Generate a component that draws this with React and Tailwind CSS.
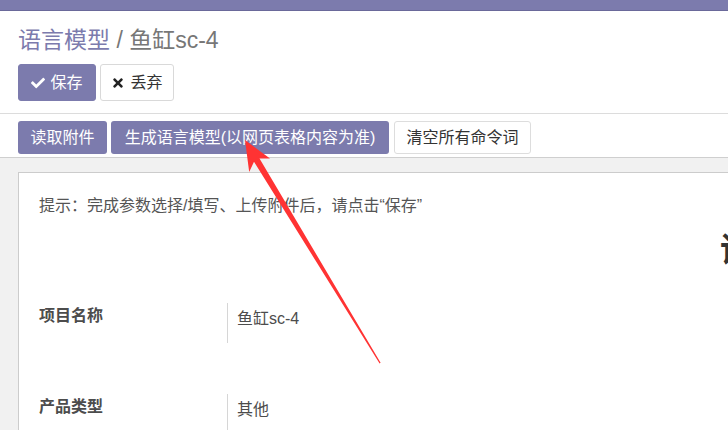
import { FaCheck, FaTimes } from "react-icons/fa";

const font = "font-['Liberation_Sans','Noto_Sans_CJK_SC',sans-serif]";

function Arrow() {
  // red annotation arrow drawn over the page
  return (
    <svg
      className="pointer-events-none absolute left-0 top-0"
      width="728"
      height="430"
      viewBox="0 0 728 430"
    >
      <polygon
        points="245,140 270,158.5 259.5,158.6 380.6,362.8 379.6,363.4 254,161.8 249.2,172"
        fill="#ff3333"
      />
    </svg>
  );
}

export default function App() {
  return (
    <div className={`relative h-[430px] w-[728px] overflow-hidden bg-white text-[#4c4c4c] ${font}`}>
      {/* TOP BAR */}
      <div className="h-[11px] bg-[#7c7bad] border-b border-[#6a699a]" />

      {/* CONTROL PANEL */}
      <div className="border-b border-[#dcdcdc] px-[18px] pb-[12px] pt-[15px]">
        <div className="text-[23px] leading-[28px] whitespace-nowrap">
          <span className="text-[#7c7bad]">语言模型</span>
          <span className="text-[#777777]"> / 鱼缸sc-4</span>
        </div>
        <div className="mt-[10px] flex gap-[4px]">
          <button className="flex h-[37px] w-[78px] items-center justify-center gap-[5px] rounded-[3px] border border-[#7c7bad] bg-[#7c7bad] text-[16px] text-white">
            <FaCheck size={14} />
            保存
          </button>
          <button className="flex h-[37px] w-[74px] items-center justify-center gap-[5px] rounded-[3px] border border-[#d9d9d9] bg-white text-[16px] text-[#333333]">
            <FaTimes size={14} className="text-[#222222]" />
            丢弃
          </button>
        </div>
      </div>

      {/* STATUS BUTTONS */}
      <div className="flex border-b border-[#cfcfcf] px-[18px] pb-[3px] pt-[7px]">
        <button className="flex h-[33px] w-[89px] items-center justify-center rounded-[3px] bg-[#7c7bad] text-[16px] text-white">
          读取附件
        </button>
        <button className="ml-[4px] flex h-[33px] w-[278px] items-center justify-center rounded-[3px] bg-[#7c7bad] text-[16px] text-white whitespace-nowrap">
          生成语言模型(以网页表格内容为准)
        </button>
        <button className="ml-[5px] flex h-[33px] w-[137px] items-center justify-center rounded-[3px] border border-[#dddddd] bg-white text-[16px] text-[#333333]">
          清空所有命令词
        </button>
      </div>

      {/* SHEET BACKGROUND */}
      <div className="h-[300px] bg-[#f1f1f1] pl-[18px] pt-[14px]">
        <div className="h-[400px] w-[1200px] border border-[#cccccc] bg-white">
          <div className="pl-[20px] pt-[23px] text-[16px] leading-5 text-[#555555] whitespace-nowrap">
            提示：完成参数选择/填写、上传附件后，请点击“保存”
          </div>

          <div className="mt-[14px] h-[40px] pl-[701px] text-[34px] font-bold leading-[40px] text-[#333333] whitespace-nowrap">
            语言模型
          </div>

          <div className="mt-[33px] flex h-[40px]">
            <div className="w-[208px] shrink-0 pl-[20px] pt-[3px] text-[16px] font-bold leading-5 text-[#4c4c4c]">
              项目名称
            </div>
            <div className="border-l border-[#d6d6d6] pl-[9px] pt-[6px] text-[16px] leading-5">
              鱼缸sc-4
            </div>
          </div>

          <div className="mt-[51px] flex h-[40px]">
            <div className="w-[208px] shrink-0 pl-[20px] pt-[3px] text-[16px] font-bold leading-5 text-[#4c4c4c]">
              产品类型
            </div>
            <div className="border-l border-[#d6d6d6] pl-[9px] pt-[6px] text-[16px] leading-5">
              其他
            </div>
          </div>
        </div>
      </div>

      <Arrow />
    </div>
  );
}
